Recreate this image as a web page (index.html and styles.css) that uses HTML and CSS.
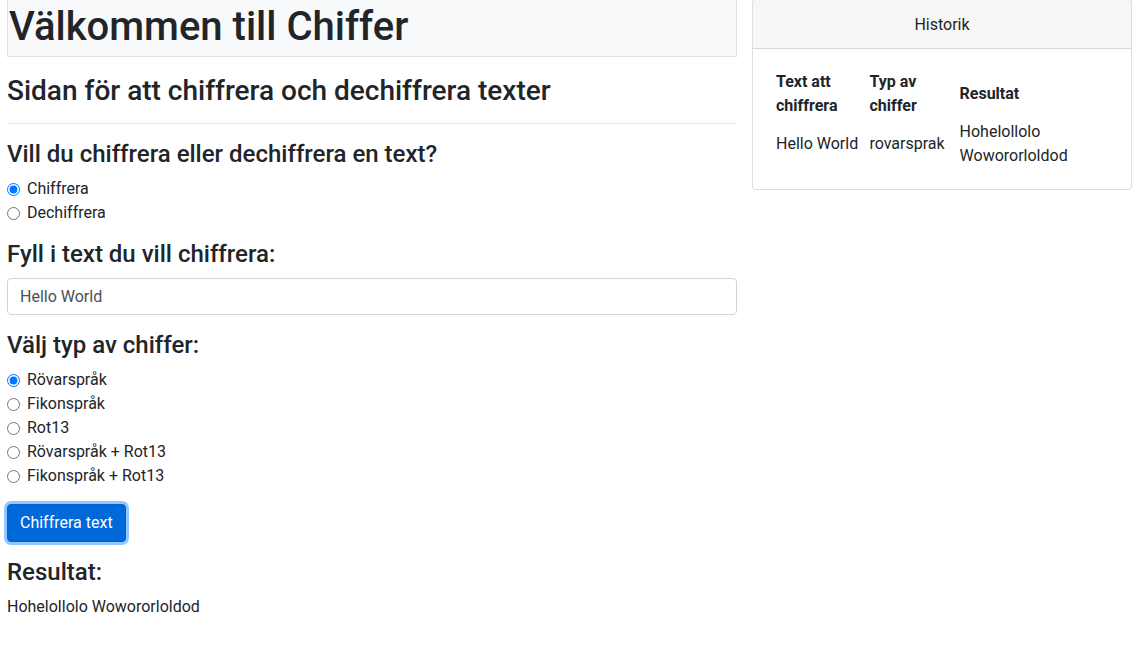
FILE: index.html
```html
<!DOCTYPE html>
<html lang="sv">
<head>
<meta charset="utf-8">
<title>Chiffer</title>
<link rel="stylesheet" href="styles.css">
</head>
<body>
<div class="page">
  <main class="main">
    <div class="banner"><h1>Välkommen till Chiffer</h1></div>
    <h3 class="subtitle">Sidan för att chiffrera och dechiffrera texter</h3>
    <hr class="divider">
    <form class="form">
      <section class="group">
        <h4>Vill du chiffrera eller dechiffrera en text?</h4>
        <label class="check"><input type="radio" name="mode" checked><span>Chiffrera</span></label>
        <label class="check"><input type="radio" name="mode"><span>Dechiffrera</span></label>
      </section>
      <section class="group">
        <h4 class="field-title">Fyll i text du vill chiffrera:</h4>
        <input class="field" type="text" value="Hello World">
      </section>
      <section class="group">
        <h4>Välj typ av chiffer:</h4>
        <label class="check"><input type="radio" name="type" checked><span>Rövarspråk</span></label>
        <label class="check"><input type="radio" name="type"><span>Fikonspråk</span></label>
        <label class="check"><input type="radio" name="type"><span>Rot13</span></label>
        <label class="check"><input type="radio" name="type"><span>Rövarspråk + Rot13</span></label>
        <label class="check"><input type="radio" name="type"><span>Fikonspråk + Rot13</span></label>
      </section>
      <div class="actions"><button type="button" class="btn">Chiffrera text</button></div>
    </form>
    <h4 class="result-title">Resultat:</h4>
    <p class="result">Hohelollolo Wowororloldod</p>
  </main>
  <aside class="side">
    <div class="card">
      <div class="card-header">Historik</div>
      <div class="card-body">
        <table class="history">
          <thead>
            <tr><th>Text att chiffrera</th><th>Typ av chiffer</th><th>Resultat</th></tr>
          </thead>
          <tbody>
            <tr><td>Hello World</td><td>rovarsprak</td><td>Hohelollolo Wowororloldod</td></tr>
          </tbody>
        </table>
      </div>
    </div>
  </aside>
</div>
</body>
</html>
```

FILE: styles.css
```css
* { box-sizing: border-box; }
html, body { margin: 0; padding: 0; background: #fff; }
body {
  font-family: Roboto, "Open Sans", sans-serif;
  font-size: 16px;
  line-height: 1.5;
  color: #212529;
}
.page {
  display: flex;
  align-items: flex-start;
  gap: 15px;
  padding: 0 11px 0 7px;
}
.main { width: 730px; flex: none; }
.side { flex: 1; margin-top: -1px; }

h1, h3, h4 { font-weight: 500; line-height: 1.2; margin: 0; }

.banner {
  background: #f8f9fa;
  border: 1px solid #dee2e6;
  border-top: none;
  padding: 3px 0 5px 1px;
}
.banner h1 { font-size: 40px; line-height: 48px; }

.subtitle { font-size: 28px; margin: 17px 0 0; }
.divider {
  border: 0;
  border-top: 1px solid rgba(0,0,0,.1);
  margin: 15px 0 16px;
}
.form { margin: 0; }
.group { margin-bottom: 16px; }
.group h4 { font-size: 24px; margin-bottom: 8px; }
.group .field-title { margin-bottom: 9px; }
.check { display: flex; align-items: center; height: 24px; padding-top: 1px; }
.check input { margin: 1px 7px 0 0; width: 13px; height: 13px; }
.field {
  display: block;
  width: 100%;
  height: 37px;
  padding: 6px 12px;
  font: inherit;
  color: #495057;
  border: 1px solid #ced4da;
  border-radius: 4px;
  background: #fff;
}
.actions { margin-top: 16px; }
.btn {
  font: inherit;
  color: #fff;
  background: #0069d9;
  border: 1px solid #0062cc;
  border-radius: 4px;
  padding: 6px 12px;
  line-height: 24px;
  box-shadow: 0 0 0 3px rgba(38,143,255,.5);
}
.result-title { font-size: 24px; margin: 16px 0 8px; }
.result { margin: 0; }

.card {
  border: 1px solid rgba(0,0,0,.125);
  border-radius: 4px;
  background: #fff;
}
.card-header {
  text-align: center;
  padding: 13px 20px 11px;
  background: rgba(0,0,0,.03);
  border-bottom: 1px solid rgba(0,0,0,.125);
}
.card-body { padding: 20px; }
.history { width: 100%; border-spacing: 2px 0; }
.history th, .history td { padding: 1px; text-align: left; vertical-align: middle; }
.history th { font-weight: 700; }
```
